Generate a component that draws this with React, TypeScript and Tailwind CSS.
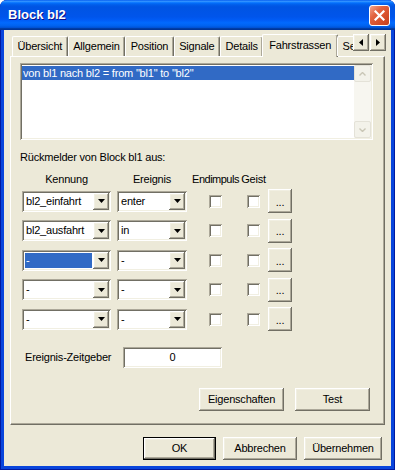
import React from "react";

// classic 3D edges (XP "Windows Classic" palette on ECE9D8)
const raised =
  "shadow-[inset_-1px_-1px_0_#716F64,inset_1px_1px_0_#FFFFFF,inset_-2px_-2px_0_#ACA899,inset_2px_2px_0_#F1EFE2]";
const sunken =
  "shadow-[inset_1px_1px_0_#ACA899,inset_-1px_-1px_0_#FFFFFF,inset_2px_2px_0_#716F64,inset_-2px_-2px_0_#F1EFE2]";

const DownTri = () => (
  <svg width="7" height="4" viewBox="0 0 7 4">
    <polygon points="0,0 7,0 3.5,4" fill="#000" />
  </svg>
);

const Combo = ({ value, wide, selected }: { value: string; wide?: boolean; selected?: boolean }) => (
  <div className={`flex h-[21px] items-stretch bg-white p-[2px] ${sunken} ${wide ? "w-[89px]" : "w-[70px]"}`}>
    <div className="flex flex-1 items-center overflow-hidden">
      {selected ? (
        <div className="m-[1px] flex h-[15px] flex-1 items-center bg-[#316AC5] pl-[1px] text-white">{value}</div>
      ) : (
        <div className="pl-[2px]">{value}</div>
      )}
    </div>
    <div className={`flex w-[16px] items-center justify-center bg-[#ECE9D8] ${raised}`}>
      <DownTri />
    </div>
  </div>
);

const Check = () => <div className={`h-[13px] w-[13px] bg-white ${sunken}`} />;

const Btn = ({ label, className }: { label: string; className: string }) => (
  <div className={`flex items-center justify-center bg-[#ECE9D8] ${raised} ${className}`}>{label}</div>
);

const rows = [
  { k: "bl2_einfahrt", e: "enter" },
  { k: "bl2_ausfahrt", e: "in" },
  { k: "-", e: "-", sel: true },
  { k: "-", e: "-" },
  { k: "-", e: "-" },
];

const tabs = ["Übersicht", "Allgemein", "Position", "Signale", "Details"];

export default function App() {
  return (
    <div className="h-[470px] w-[395px] overflow-hidden font-['Liberation_Sans',Arial,sans-serif] text-[11px] leading-[13px] tracking-[-0.2px] text-black">
      <div className="flex h-full flex-col rounded-t-[7px] bg-[#0845DC] shadow-[inset_1px_0_0_#0019A0,inset_-1px_0_0_#0019A0,inset_0_-1px_0_#0019A0]">
        {/* title bar */}
        <div className="flex h-[30px] items-center justify-between rounded-t-[7px] bg-[linear-gradient(180deg,#0058EE_0%,#3593FF_4%,#288EFF_6%,#127DFF_8%,#036FFC_10%,#0262EE_14%,#0057E5_20%,#0054E3_24%,#0055EB_56%,#005BF5_66%,#026AFE_76%,#0062EF_86%,#0052D6_92%,#0040AB_94%,#003092_100%)] pl-[8px] pr-[5px]">
          <span className="pb-[1px] text-[13px] font-bold tracking-normal text-white [text-shadow:1px_1px_#0F1089]">Block bl2</span>
          <div className="flex h-[21px] w-[21px] items-center justify-center rounded-[3px] border border-white bg-[linear-gradient(135deg,#F3A58F_0%,#E2633F_35%,#D8502B_65%,#C4401C_100%)]">
            <svg width="11" height="11" viewBox="0 0 11 11">
              <path d="M1.5 1.5 L9.5 9.5 M9.5 1.5 L1.5 9.5" stroke="#fff" strokeWidth="2.2" strokeLinecap="square" />
            </svg>
          </div>
        </div>

        {/* client area */}
        <div className="mx-[4px] flex h-[436px] flex-col bg-[#ECE9D8]">
          {/* tabs */}
          <div className="relative z-10 ml-[6px] mt-[4px] flex h-[23px] w-[376px]">
            <div className="flex h-[23px] w-[343px] items-end overflow-hidden pl-[2px]">
              {tabs.map((t) => (
                <div
                  key={t}
                  className="mb-[1px] flex h-[20px] shrink-0 items-center rounded-t-[2px] border-l border-t border-r border-l-white border-t-white border-r-[#716F64] px-[4.5px] shadow-[inset_-1px_0_0_#ACA899] whitespace-nowrap"
                >
                  {t}
                </div>
              ))}
              <div className="-mx-[1px] flex h-[23px] shrink-0 items-center rounded-t-[2px] border-l border-t border-r border-l-white border-t-white border-r-[#716F64] bg-[#ECE9D8] px-[6px] pb-[2px] shadow-[inset_-1px_0_0_#ACA899] whitespace-nowrap">
                Fahrstrassen
              </div>
              <div className="mb-[1px] flex h-[20px] shrink-0 items-center rounded-t-[2px] border-l border-t border-l-white border-t-white px-[4.5px] whitespace-nowrap">
                Sensoren
              </div>
            </div>
            <div className="flex gap-[1px]">
              <div className={`flex h-[17px] w-[16px] items-center justify-center bg-[#ECE9D8] ${raised}`}>
                <svg width="4" height="7" viewBox="0 0 4 7">
                  <polygon points="4,0 4,7 0,3.5" fill="#000" />
                </svg>
              </div>
              <div className={`flex h-[17px] w-[16px] items-center justify-center bg-[#ECE9D8] ${raised}`}>
                <svg width="4" height="7" viewBox="0 0 4 7">
                  <polygon points="0,0 0,7 4,3.5" fill="#000" />
                </svg>
              </div>
            </div>
          </div>

          {/* tab page */}
          <div className="-mt-[1px] ml-[6px] flex h-[369px] w-[375px] flex-col border border-t-white border-l-white border-r-[#716F64] border-b-[#716F64] shadow-[inset_-1px_-1px_0_#ACA899]">
            {/* list */}
            <div className={`ml-[9px] mt-[6px] flex h-[77px] w-[353px] bg-white p-[2px] ${sunken}`}>
              <div className="flex-1 pt-[1px]">
                <div className="flex h-[14px] items-center bg-[#316AC5] pl-[1px] text-white">
                  von bl1 nach bl2 = from "bl1" to "bl2"
                </div>
              </div>
              <div className="flex w-[17px] flex-col justify-between bg-[#F7F6F0]">
                <div className="flex h-[17px] items-center justify-center rounded-[2px] border border-[#E4E2D8] bg-[#F3F2EA]">
                  <svg width="7" height="4" viewBox="0 0 7 4">
                    <path d="M0.5 3.5 L3.5 0.5 L6.5 3.5" stroke="#C9C6B6" strokeWidth="1.4" fill="none" />
                  </svg>
                </div>
                <div className="flex h-[17px] items-center justify-center rounded-[2px] border border-[#E4E2D8] bg-[#F3F2EA]">
                  <svg width="7" height="4" viewBox="0 0 7 4">
                    <path d="M0.5 0.5 L3.5 3.5 L6.5 0.5" stroke="#C9C6B6" strokeWidth="1.4" fill="none" />
                  </svg>
                </div>
              </div>
            </div>

            <div className="ml-[9px] mt-[11px]">Rückmelder von Block bl1 aus:</div>

            {/* column headers */}
            <div className="ml-[11px] mt-[9px] flex whitespace-nowrap">
              <div className="flex w-[89px] justify-center">Kennung</div>
              <div className="ml-[6px] flex w-[70px] justify-center">Ereignis</div>
              <div className="ml-[2px] flex w-[53px] justify-center tracking-[-0.5px]">Endimpuls</div>
              <div className="flex w-[23px] justify-center">Geist</div>
            </div>

            <div className="ml-[11px] mt-[3px] flex flex-col gap-[5.5px]">
              {rows.map((r, i) => (
                <div key={i} className="flex h-[24px] items-center">
                  <Combo value={r.k} wide selected={r.sel} />
                  <div className="ml-[6px]">
                    <Combo value={r.e} />
                  </div>
                  <div className="ml-[2px] flex w-[53px] justify-center">
                    <Check />
                  </div>
                  <div className="flex w-[22px] justify-center">
                    <Check />
                  </div>
                  <div className={`ml-[4px] flex h-[24px] w-[24px] items-center justify-center bg-[#ECE9D8] pt-[2px] ${raised}`}>
                    ...
                  </div>
                </div>
              ))}
            </div>

            {/* timer */}
            <div className="ml-[14px] mt-[16px] flex h-[21px] items-center">
              <div className="w-[98px]">Ereignis-Zeitgeber</div>
              <div className={`flex h-[21px] w-[99px] items-center justify-center bg-white ${sunken}`}>0</div>
            </div>

            <div className="mt-[20px] flex justify-end gap-[11px] pr-[14px]">
              <Btn label="Eigenschaften" className="h-[23px] w-[85px]" />
              <Btn label="Test" className="h-[23px] w-[75px]" />
            </div>
          </div>

          {/* dialog buttons */}
          <div className="mt-[12px] flex justify-end gap-[7px] pr-[9px]">
            <div className="h-[23px] w-[73px] border border-black">
              <Btn label="OK" className="h-full w-full" />
            </div>
            <Btn label="Abbrechen" className="h-[23px] w-[74px]" />
            <Btn label="Übernehmen" className="h-[23px] w-[78px]" />
          </div>
        </div>
      </div>
    </div>
  );
}
